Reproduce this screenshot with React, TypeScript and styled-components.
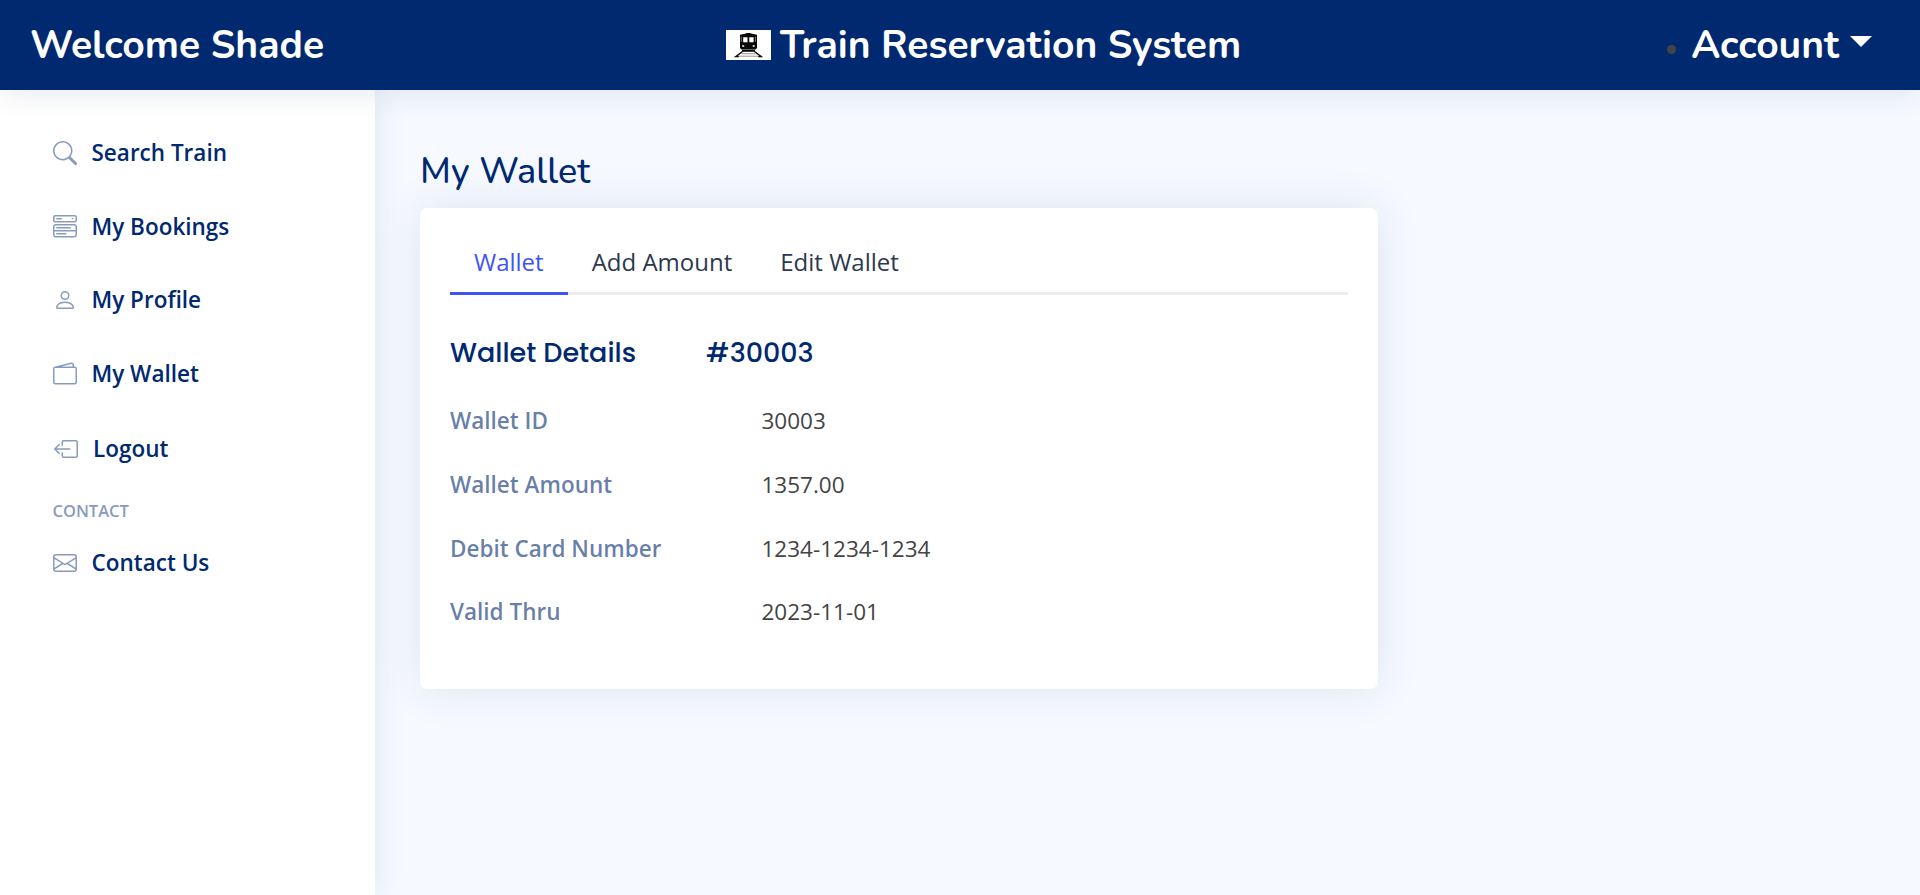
import React from "react";
import styled, { createGlobalStyle } from "styled-components";
import {
  BsSearch,
  BsMenuButtonWide,
  BsPerson,
  BsWallet2,
  BsBoxArrowLeft,
  BsEnvelope,
} from "react-icons/bs";

const GlobalStyle = createGlobalStyle`
  *, *::before, *::after { box-sizing: border-box; }
  body {
    margin: 0;
    background: #f6f9ff;
    color: #444444;
    font-family: "Open Sans", sans-serif;
    font-size: 24px;
    line-height: 36px;
    overflow: hidden;
  }
`;

const Page = styled.div`
  display: flex;
  flex-direction: column;
  height: 895px;
`;

const Header = styled.header`
  position: relative;
  z-index: 2;
  flex: none;
  display: flex;
  justify-content: space-between;
  align-items: center;
  height: 90px;
  padding: 0 48px 0 30px;
  background: #012970;
  box-shadow: 0 3px 30px rgba(1, 41, 112, 0.1);
`;

const Brand = styled.span`
  padding-top: 2px;
  font-family: Nunito, Lato, sans-serif;
  font-size: 39px;
  font-weight: 700;
  line-height: 48px;
  white-space: nowrap;
  color: #ffffff;
`;

const Title = styled.div`
  display: flex;
  align-items: center;
  gap: 9px;
`;

const Account = styled.div`
  display: flex;
  align-items: center;
  justify-content: flex-end;
`;

const Bullet = styled.span`
  width: 9px;
  height: 9px;
  margin: 9px 15px 0 24px;
  border-radius: 50%;
  background: #444444;
`;

const Caret = styled.span`
  margin: -7px 0 0 11px;
  border-top: 11.5px solid #ffffff;
  border-left: 11.5px solid transparent;
  border-right: 11.5px solid transparent;
`;

const Body = styled.div`
  flex: 1;
  display: flex;
`;

const Sidebar = styled.aside`
  flex: none;
  width: 375px;
  padding: 30px;
  background: #ffffff;
  box-shadow: 0 0 30px rgba(1, 41, 112, 0.1);
`;

const NavItem = styled.a<{ $inset?: boolean }>`
  display: flex;
  align-items: center;
  height: 66px;
  margin-top: ${(p) => (p.$inset ? 9.5 : 0)}px;
  margin-bottom: 7.5px;
  padding: 0 22.5px;
  padding-left: ${(p) => (p.$inset ? 24 : 22.5)}px;
  color: #012970;
  font-size: 22.5px;
  font-weight: 600;
  white-space: nowrap;

  svg {
    flex: none;
    width: 24px;
    height: 24px;
    margin-right: 15px;
    color: #899bbd;
  }
`;

const NavHeading = styled.div`
  margin: 15.5px 0 7.5px 22.5px;
  color: #899bbd;
  font-size: 16.5px;
  font-weight: 600;
  line-height: 25px;
  text-transform: uppercase;
`;

const Main = styled.main`
  flex: 1;
  padding: 60px 45px;
`;

const PageTitle = styled.h1`
  margin: 0 0 15px;
  color: #012970;
  font-family: Nunito, Lato, sans-serif;
  font-size: 36px;
  font-weight: 500;
  line-height: 43px;
  letter-spacing: 0.1px;
`;

const Card = styled.section`
  width: 958px;
  height: 481px;
  padding: 30px;
  background: #ffffff;
  border-radius: 7.5px;
  box-shadow: 0 0 45px rgba(1, 41, 112, 0.1);
`;

const Tabs = styled.nav`
  display: flex;
  height: 57px;
  border-bottom: 3px solid #ebeef4;
`;

const Tab = styled.a<{ $active?: boolean }>`
  height: 57px;
  padding: 6px 24px 0;
  border-bottom: 3px solid ${(p) => (p.$active ? "#4154f1" : "transparent")};
  color: ${(p) => (p.$active ? "#4154f1" : "#2c384e")};
  font-weight: 400;
`;

const DetailsTitle = styled.h2`
  display: flex;
  gap: 70px;
  margin: 42px 0 34px;
  color: #012970;
  font-family: Poppins, Inter, sans-serif;
  font-size: 27px;
  font-weight: 500;
  line-height: 32px;
`;

const Row = styled.div`
  display: grid;
  grid-template-columns: 311.5px 1fr;
  margin-bottom: 27.75px;
  font-size: 22.5px;
`;

const Label = styled.div`
  color: rgba(1, 41, 112, 0.6);
  font-weight: 600;
`;

const Value = styled.div`
  font-weight: 400;
`;

const TrainLogo = () => (
  <svg width="45" height="30" viewBox="0 0 45 30">
    <rect width="45" height="30" fill="#fff" />
    <path d="M14 6V4.8l5-1.1L21 3h3l2 .7 5 1.1V18l-1.5 1.5h-14L14 18z" fill="#080808" />
    <path d="M17.2 7.2h4.3v5h-4.3zM23.3 7.2h4.3v5h-4.3z" fill="#fff" />
    <path d="M14.8 6.8h1v5h-1zM29 6.8h1v5h-1z" fill="#777" />
    <path d="M16.2 15.2h2v1.5h-2zM26.7 15.2h2v1.5h-2z" fill="#fff" />
    <path d="M16 19.8h13v2H16z" fill="#080808" />
    <path d="M16.5 21.5 9.8 26.6h3M28.5 21.5l6.7 5.1h-3" fill="none" stroke="#080808" strokeWidth="1.4" />
    <path d="M15.5 23.7h14M13 26.2h19" stroke="#8a8487" strokeWidth="0.9" />
  </svg>
);

const links = [
  { label: "Search Train", Icon: BsSearch },
  { label: "My Bookings", Icon: BsMenuButtonWide },
  { label: "My Profile", Icon: BsPerson },
  { label: "My Wallet", Icon: BsWallet2 },
  { label: "Logout", Icon: BsBoxArrowLeft, inset: true },
];

const details = [
  ["Wallet ID", "30003"],
  ["Wallet Amount", "1357.00"],
  ["Debit Card Number", "1234-1234-1234"],
  ["Valid Thru", "2023-11-01"],
];

export default function App() {
  return (
    <>
      <GlobalStyle />
      <Page>
        <Header>
          <Brand>Welcome Shade</Brand>
          <Title>
            <TrainLogo />
            <Brand>Train Reservation System</Brand>
          </Title>
          <Account>
            <Bullet />
            <Brand>Account</Brand>
            <Caret />
          </Account>
        </Header>
        <Body>
          <Sidebar>
            {links.map(({ label, Icon, inset }) => (
              <NavItem key={label} $inset={inset}>
                <Icon />
                {label}
              </NavItem>
            ))}
            <NavHeading>Contact</NavHeading>
            <NavItem>
              <BsEnvelope />
              Contact Us
            </NavItem>
          </Sidebar>
          <Main>
            <PageTitle>My Wallet</PageTitle>
            <Card>
              <Tabs>
                <Tab $active>Wallet</Tab>
                <Tab>Add Amount</Tab>
                <Tab>Edit Wallet</Tab>
              </Tabs>
              <DetailsTitle>
                <span>Wallet Details</span>
                <span>#30003</span>
              </DetailsTitle>
              {details.map(([label, value]) => (
                <Row key={label}>
                  <Label>{label}</Label>
                  <Value>{value}</Value>
                </Row>
              ))}
            </Card>
          </Main>
        </Body>
      </Page>
    </>
  );
}
